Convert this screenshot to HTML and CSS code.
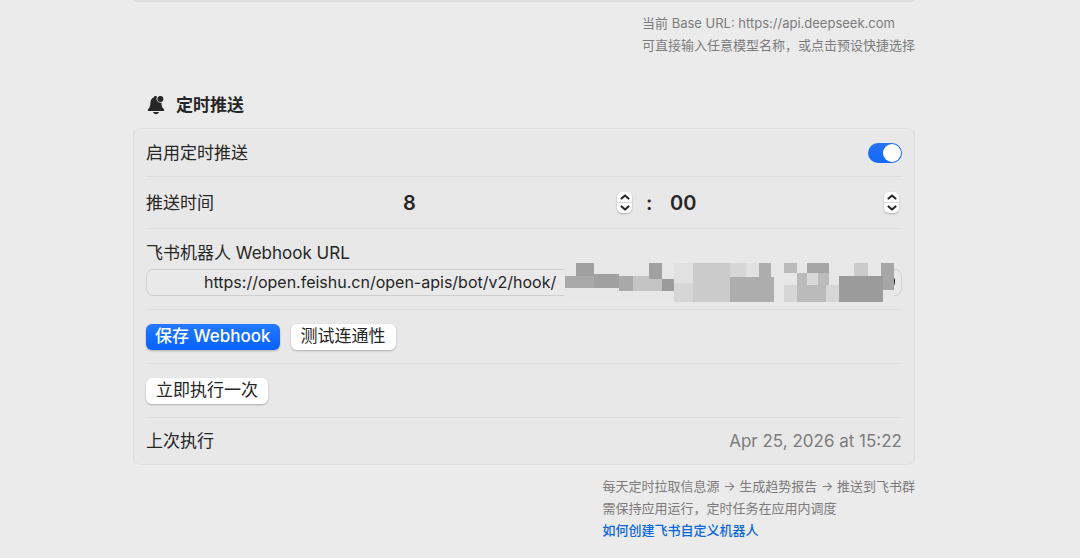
FILE: index.html
```html
<!DOCTYPE html>
<html lang="zh-CN">
<head>
    <meta charset="UTF-8">
    <meta name="viewport" content="width=device-width, initial-scale=1.0">
    <title>定时推送</title>
    <link rel="stylesheet" href="styles.css">
</head>
<body>
    <main class="settings">
        <section class="model-section">
            <div class="note">
                <p>当前 Base URL: https://api.deepseek.com</p>
                <p>可直接输入任意模型名称，或点击预设快捷选择</p>
            </div>
        </section>

        <section>
            <h2 class="section-title">
                <svg class="bell" viewBox="0 0 18 20" aria-hidden="true">
                    <path d="M8.6 1C9.2 1 9.6 1.2 10 1.6A4.1 4.1 0 0 0 14.4 7.6C14.6 11.4 15 12.4 16.8 14C17.7 14.9 17.3 16 16.2 16H1.8C.7 16 .3 14.9 1.2 14C3 12.4 3.2 11.2 3.4 8C3.6 4.8 4.9 3.1 6.9 2.3C7.1 1.5 7.7 1 8.6 1Z"/>
                    <circle cx="13.4" cy="3.9" r="3"/>
                    <path d="M6 17H12C11.5 18.4 10.4 19.2 9 19.2S6.5 18.4 6 17Z"/>
                </svg>
                定时推送
            </h2>

            <form class="panel">
                <div class="row">
                    <label for="enabled">启用定时推送</label>
                    <input class="switch" type="checkbox" id="enabled" checked>
                </div>

                <div class="row row-time">
                    <label for="hour">推送时间</label>
                    <div class="time">
                        <div class="time-field">
                            <input type="text" id="hour" value="8">
                            <div class="stepper">
                                <button type="button" aria-label="增加小时"><svg viewBox="0 0 10 6"><path d="M1.5 4.6L5 1.4L8.5 4.6"/></svg></button>
                                <button type="button" aria-label="减少小时"><svg viewBox="0 0 10 6"><path d="M1.5 1.4L5 4.6L8.5 1.4"/></svg></button>
                            </div>
                        </div>
                        <span class="colon">:</span>
                        <div class="time-field">
                            <input type="text" id="minute" value="00" aria-label="分钟">
                            <div class="stepper">
                                <button type="button" aria-label="增加分钟"><svg viewBox="0 0 10 6"><path d="M1.5 4.6L5 1.4L8.5 4.6"/></svg></button>
                                <button type="button" aria-label="减少分钟"><svg viewBox="0 0 10 6"><path d="M1.5 1.4L5 4.6L8.5 1.4"/></svg></button>
                            </div>
                        </div>
                    </div>
                </div>

                <div class="row row-webhook">
                    <label for="webhook">飞书机器人 Webhook URL</label>
                    <div class="url-field">
                        <input type="text" id="webhook" value="https://open.feishu.cn/open-apis/bot/v2/hook/">
                        <!-- covers the secret part of the hook address -->
                        <svg class="mosaic" viewBox="42 69 993 117" preserveAspectRatio="none" shape-rendering="crispEdges" aria-hidden="true">
                            <path fill="#222" shape-rendering="auto" d="M1030 111Q1036 115 1035 126T1030 140Z"/>
                            <path fill="#e7e7e7" d="M42 69H1031V186H372V181H42Z"/>
                            <path fill="#e1e1e1" d="M372 69H429V129H372ZM588 69H627V111H588Z"/>
                            <path fill="#d6d6d6" d="M372 129H429V186H372ZM540 69H588V111H540ZM703 135H741V186H703ZM828 135H867V186H828Z"/>
                            <path fill="#cbcbcb" d="M429 69H540V186H429ZM911 69H954V108H911Z"/>
                            <path fill="#c4c4c4" d="M249 108H336V152H249Z"/>
                            <path fill="#a0a0a0" d="M78 69H132V108H78ZM297 69H336V117H297ZM132 102H208V143H132Z"/>
                            <path fill="#a9a9a9" d="M44 108H132V143H44ZM208 108H249V152H208Z"/>
                            <path fill="#9b9b9b" d="M336 117H372V152H336ZM867 108H998V186H867Z"/>
                            <path fill="#adadad" d="M627 69H662V111H672V186H540V111H627Z"/>
                            <path fill="#bbb" d="M703 69H741V99H703ZM741 99H836V135H828V186H741Z"/>
                            <path fill="#a6a6a6" d="M771 69H836V99H771ZM993 69H1031V150H998V108H993Z"/>
                            <path fill="#d8d8d8" d="M771 99H803V134H771Z"/>
                        </svg>
                    </div>
                </div>

                <div class="row row-buttons">
                    <button type="button" class="btn btn-primary">保存 Webhook</button>
                    <button type="button" class="btn">测试连通性</button>
                </div>

                <div class="row row-buttons">
                    <button type="button" class="btn">立即执行一次</button>
                </div>

                <div class="row">
                    <span>上次执行</span>
                    <span class="value">Apr 25, 2026 at 15:22</span>
                </div>
            </form>

            <div class="note">
                <p>每天定时拉取信息源 → 生成趋势报告 → 推送到飞书群</p>
                <p>需保持应用运行，定时任务在应用内调度</p>
                <p><a href="#">如何创建飞书自定义机器人</a></p>
            </div>
        </section>
    </main>
</body>
</html>
```
FILE: styles.css
```css
* {
    box-sizing: border-box;
}
body {
    margin: 0;
    background-color: #ebebeb;
    color: #262626;
    font-family: Inter, "Noto Sans CJK SC", sans-serif;
    font-size: 17px;
    line-height: 24px;
}
p {
    margin: 0;
}
input, button {
    font: inherit;
    color: inherit;
}
.settings {
    padding: 0 165px 0 133px;
}
.model-section {
    border-top: 2px solid #dedede;
    padding-bottom: 37px;
}
.note {
    width: fit-content;
    margin-left: auto;
    padding-top: 10px;
    color: #7c7c7c;
    font-size: 13px;
    line-height: 22px;
}
.note a {
    color: #0a68da;
    font-weight: 500;
    text-decoration: none;
}
.section-title {
    display: flex;
    align-items: center;
    gap: 11px;
    margin: 0 0 11px;
    padding-left: 14px;
    font-size: 17px;
    font-weight: 600;
}
.bell {
    width: 18px;
    height: 20px;
    fill: #262626;
}
.panel {
    padding: 0 12px;
    background-color: #e8e8e8;
    border: 1px solid #dfdfdf;
    border-radius: 7px;
}
.row {
    display: flex;
    align-items: center;
    justify-content: space-between;
    min-height: 47px;
}
.row + .row {
    border-top: 1px solid #dedede;
}
.switch {
    appearance: none;
    width: 34px;
    height: 20px;
    margin: 0;
    padding: 1px;
    border-radius: 10px;
    background: #c8c8c8;
}
.switch::before {
    content: "";
    display: block;
    width: 18px;
    height: 18px;
    border-radius: 50%;
    background: #fff;
}
.switch:checked {
    background: linear-gradient(#2a72ee, #0f69fb);
}
.switch:checked::before {
    margin-left: auto;
}
.row-time {
    min-height: 52px;
}
.time {
    display: flex;
    align-items: center;
    width: 66%;
    font-size: 20px;
    font-weight: 600;
}
.time-field {
    display: flex;
    flex: 1;
    align-items: center;
    min-width: 0;
    padding-right: 3px;
}
.time-field input {
    flex: 1;
    min-width: 0;
    padding: 0;
    border: 0;
    background: none;
}
.colon {
    width: 35px;
    padding-left: 11px;
}
.stepper {
    display: flex;
    flex-direction: column;
    width: 15px;
    border-radius: 5px;
    background: #fff;
    box-shadow: 0 1px 2px rgba(0, 0, 0, 0.25);
}
.stepper button {
    display: flex;
    align-items: center;
    justify-content: center;
    height: 10px;
    padding: 0;
    border: 0;
    background: none;
}
.stepper button + button {
    border-top: 1px solid #dcdcdc;
    height: 11px;
}
.stepper svg {
    width: 10px;
    height: 6px;
    fill: none;
    stroke: #262626;
    stroke-width: 2;
    stroke-linecap: round;
    stroke-linejoin: round;
}
.row-webhook {
    flex-direction: column;
    align-items: stretch;
    padding: 12px 0 13px;
    gap: 4px;
}
.url-field {
    position: relative;
}
.url-field input {
    display: block;
    width: 100%;
    height: 27px;
    padding: 0 57px 2px;
    border: 1px solid #cfcfcf;
    border-radius: 7px;
    background: #e9e9e9;
    font-size: 16px;
}
.mosaic {
    position: absolute;
    top: -6px;
    right: 7px;
    width: 331px;
    height: 39px;
}
.row-buttons {
    justify-content: flex-start;
    gap: 11px;
    min-height: 54px;
}
.btn {
    height: 26px;
    padding: 0 10px 2px;
    border: 0;
    border-radius: 6px;
    background: #fff;
    box-shadow: 0 1px 2px rgba(0, 0, 0, 0.25);
}
.btn-primary {
    padding: 0 9px 2px;
    background: linear-gradient(#2479ff, #0562fb);
    color: #fff;
    font-weight: 500;
}
.value {
    color: #7c7c7c;
}
```
